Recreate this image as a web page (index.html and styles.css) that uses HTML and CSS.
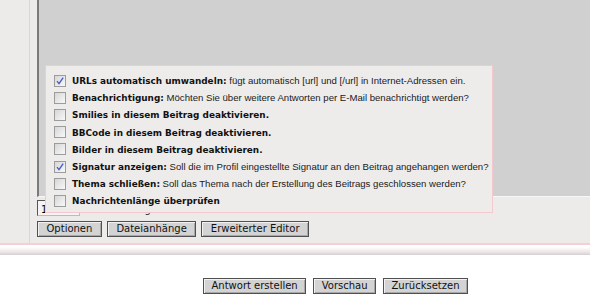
FILE: index.html
```html
<!DOCTYPE html>
<html lang="de">
<head>
<meta charset="utf-8">
<title>Antwort erstellen</title>
<link rel="stylesheet" href="styles.css">
</head>
<body>
<div class="outer">
  <div class="panel">
    <div class="editor"></div>
    <div class="len-row">
      <span class="len-input">10000</span>
      <span class="len-label">Zeichen lang</span>
    </div>
    <div class="tool-row">
      <button class="btn tool">Optionen</button>
      <button class="btn tool">Dateianhänge</button>
      <button class="btn tool">Erweiterter Editor</button>
    </div>
  </div>
</div>
<div class="shadow"></div>
<div class="submit-row">
  <button class="btn">Antwort erstellen</button>
  <button class="btn">Vorschau</button>
  <button class="btn">Zurücksetzen</button>
</div>

<div class="popup">
  <div class="opt"><span class="cb checked"><svg viewBox="0 0 12 12" width="12" height="12"><path d="M3 6.2 L5 8.6 L9.2 2.6" fill="none" stroke="#4457cc" stroke-width="1.3"/></svg></span><span class="lbl"><b>URLs automatisch umwandeln:</b> fügt automatisch [url] und [/url] in Internet-Adressen ein.</span></div>
  <div class="opt"><span class="cb"></span><span class="lbl"><b>Benachrichtigung:</b> Möchten Sie über weitere Antworten per E-Mail benachrichtigt werden?</span></div>
  <div class="opt"><span class="cb"></span><span class="lbl"><b>Smilies in diesem Beitrag deaktivieren.</b></span></div>
  <div class="opt"><span class="cb"></span><span class="lbl"><b>BBCode in diesem Beitrag deaktivieren.</b></span></div>
  <div class="opt"><span class="cb"></span><span class="lbl"><b>Bilder in diesem Beitrag deaktivieren.</b></span></div>
  <div class="opt"><span class="cb checked"><svg viewBox="0 0 12 12" width="12" height="12"><path d="M3 6.2 L5 8.6 L9.2 2.6" fill="none" stroke="#4457cc" stroke-width="1.3"/></svg></span><span class="lbl"><b>Signatur anzeigen:</b> Soll die im Profil eingestellte Signatur an den Beitrag angehangen werden?</span></div>
  <div class="opt"><span class="cb"></span><span class="lbl"><b>Thema schließen:</b> Soll das Thema nach der Erstellung des Beitrags geschlossen werden?</span></div>
  <div class="opt"><span class="cb"></span><span class="lbl"><b>Nachrichtenlänge überprüfen</b></span></div>
</div>
</body>
</html>
```

FILE: styles.css
```css
html, body {
  margin: 0;
  padding: 0;
  background: #ffffff;
  font-family: "Liberation Sans", Arial, sans-serif;
  color: #000;
}

.outer {
  background: #ecebea;
  border-bottom: 2px solid #f6cfd5;
}

.panel {
  margin-left: 29px;
  border-left: 1px solid #f3cbd1;
  padding: 0 0 6px 7px;
}

.editor {
  height: 196px;
  background: #d0d0d0;
  border-left: 2px solid #7a7a7a;
  border-bottom: 1px solid #f7f7f7;
}

.len-row {
  display: flex;
  align-items: flex-start;
  gap: 6px;
  margin-top: 3px;
  height: 16px;
}

.len-input {
  display: block;
  width: 38px;
  height: 14px;
  border: 1px solid #555;
  border-right-color: #bbb;
  border-bottom-color: #bbb;
  background: #f4f4f4;
  font-family: "DejaVu Sans", Verdana, sans-serif;
  font-size: 10px;
  line-height: 17px;
  padding-left: 3px;
  overflow: hidden;
}

.len-label {
  font-family: "DejaVu Sans", Verdana, sans-serif;
  font-size: 10px;
  line-height: 10px;
  padding-top: 5px;
  color: #333;
}

.tool-row {
  display: flex;
  gap: 5px;
  margin-top: 5px;
}

.btn {
  font-family: "DejaVu Sans", Verdana, sans-serif;
  font-size: 10px;
  color: #111;
  height: 16px;
  line-height: 14px;
  padding: 0 7.5px;
  margin: 0;
  background: #d3d3d3;
  border: 1px solid #505050;
  box-shadow: inset 1px 1px 0 #f2f2f2, inset -1px -1px 0 #a8a8a8;
  border-radius: 0;
}

.btn.tool {
  padding: 0 8.5px;
}

.shadow {
  height: 10px;
  background: linear-gradient(#ffffff 20%, #ece6e6 70%, #d6cfcf 100%);
}

.submit-row {
  display: flex;
  gap: 7px;
  padding: 23px 0 0 203px;
}

.popup {
  position: absolute;
  left: 45px;
  top: 65px;
  width: 448px;
  height: 148px;
  background: #eeeceb;
  border: 1px solid #f3c9cf;
  padding: 6px 0 0 8px;
  box-sizing: border-box;
}

.opt {
  display: flex;
  align-items: center;
  height: 17.2px;
  font-size: 9.6px;
  white-space: nowrap;
}

.cb {
  display: block;
  width: 10px;
  height: 10px;
  border: 1px solid #9c9c9c;
  background: linear-gradient(135deg, #d6d6d6, #f8f8f8);
  margin-right: 6px;
  position: relative;
  flex: none;
}

.cb svg {
  position: absolute;
  left: -1px;
  top: -1px;
}

.lbl b {
  font-family: "DejaVu Sans", Verdana, sans-serif;
  font-size: 8.9px;
  color: #111;
}

.lbl {
  color: #1a1a1a;
}
```
